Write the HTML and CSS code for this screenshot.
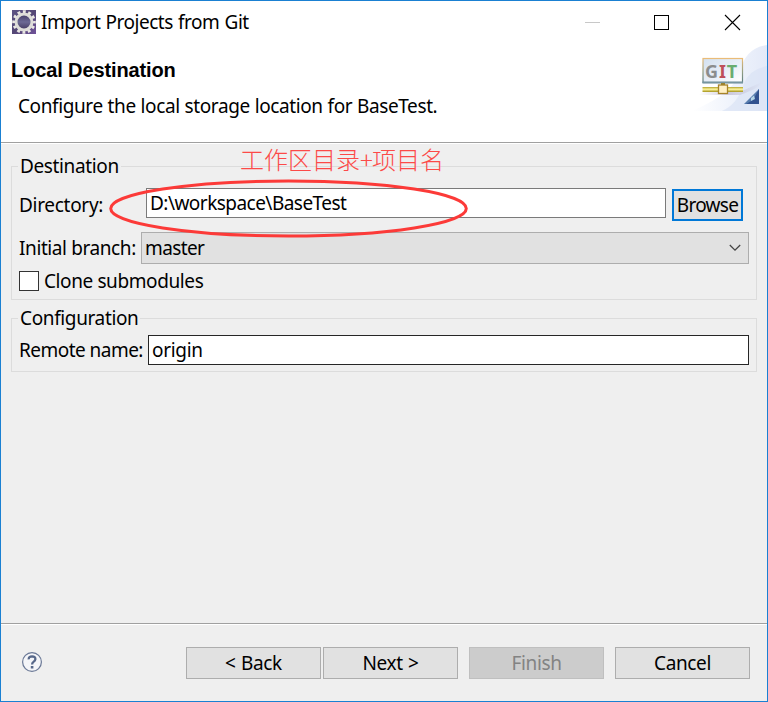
FILE: index.html
```html
<!DOCTYPE html>
<html lang="en">
<head>
<meta charset="utf-8">
<title>Import Projects from Git</title>
<link rel="stylesheet" href="styles.css">
</head>
<body>
<div class="window">
  <header class="titlebar">
    <svg class="app-icon" width="24" height="24" viewBox="0 0 24 24">
      <defs><linearGradient id="purple" x1="0" y1="0" x2="1" y2="1"><stop offset="0" stop-color="#5d5484"/><stop offset=".5" stop-color="#544775"/><stop offset="1" stop-color="#70529a"/></linearGradient>
      <linearGradient id="core" x1="0" y1="0" x2="0" y2="1"><stop offset="0" stop-color="#403663"/><stop offset=".5" stop-color="#6c6994"/><stop offset="1" stop-color="#40345c"/></linearGradient></defs>
      <rect width="24" height="24" fill="url(#purple)"/>
      <circle cx="12" cy="12" r="10.300" fill="none" stroke="#e9e7e3" stroke-width="3" stroke-dasharray="2.9 2.493" stroke-dashoffset="1.45"/>
      <circle cx="12" cy="12" r="8" fill="url(#core)" stroke="#deddd9" stroke-width="3"/>
    </svg>
    <span class="title">Import Projects from Git</span>
    <svg class="controls" width="160" height="24" viewBox="0 0 160 24" fill="none">
      <path d="M0 12.500h15" stroke="#c8c8c8"/>
      <rect x="69.500" y="5.500" width="14" height="14" stroke="#000"/>
      <path d="M140 5l15 15M155 5l-15 15" stroke="#000" stroke-width="1.100"/>
    </svg>
  </header>
  <section class="banner">
    <div class="banner-text">
      <h1>Local Destination</h1>
      <p>Configure the local storage location for BaseTest.</p>
    </div>
    <svg class="git-art" width="77" height="68" viewBox="690 43 77 68">
      <defs>
        <linearGradient id="sky" x1="0" y1="0" x2="1" y2="0"><stop offset="0" stop-color="#fff"/><stop offset=".5" stop-color="#f0f4fc"/><stop offset="1" stop-color="#e4eaf8"/></linearGradient>
        <linearGradient id="frame" x1="0" y1="0" x2="0" y2="1"><stop offset="0" stop-color="#eabc78"/><stop offset=".6" stop-color="#8d9b84"/><stop offset="1" stop-color="#597c80"/></linearGradient>
        <linearGradient id="panel" x1="0" y1="0" x2="1" y2="1"><stop offset="0" stop-color="#d3e1f0"/><stop offset=".5" stop-color="#e7eef7"/><stop offset="1" stop-color="#fff"/></linearGradient>
        <linearGradient id="cable" x1="0" y1="0" x2="0" y2="1"><stop offset="0" stop-color="#b2a129"/><stop offset=".45" stop-color="#fff7a0"/><stop offset="1" stop-color="#a39216"/></linearGradient>
        <linearGradient id="shade" x1="0" y1="0" x2="1" y2="0"><stop offset="0" stop-color="#b9b3cc" stop-opacity="0"/><stop offset=".5" stop-color="#b9b3cc" stop-opacity=".65"/><stop offset="1" stop-color="#b9b3cc" stop-opacity="0"/></linearGradient>
      </defs>
      <path d="M692 111C717 100 733 90 740 72Q745 48 767 45v66z" fill="url(#sky)"/>
      <path d="M722 111Q738 104 744 83Q750 69 767 66v45z" fill="#d9e2f5" opacity=".65"/>
      <path d="M698 95l8-4h36l20-9q-2 6-22 13z" fill="url(#shade)"/>
      <rect x="703" y="58.500" width="39.500" height="24" fill="url(#panel)" stroke="url(#frame)" stroke-width="1.200"/>
      <path d="M702.500 82.500h40.500" stroke="#7795a0" stroke-width="2"/>
      <g class="git-text"><text x="705" y="77.500" fill="#8b8d8d">G</text><text x="719" y="77.500" fill="#be4f59">I</text><text x="726.800" y="77.500" fill="#69ad70">T</text></g>
      <path d="M723 83v3" stroke="#988430" stroke-width="4"/>
      <rect x="702.500" y="87" width="40.500" height="5" fill="url(#cable)"/>
      <rect x="718.500" y="85" width="9" height="8.500" fill="#fff0c5" stroke="#a68328" stroke-width="1.300"/>
      <path d="M744 104L759 89V104z" fill="#577dae"/><path d="M753 100l6-11v15h-13z" fill="#32528f"/><path d="M751 98l3-2.500 1 3.500-4 2z" fill="#b5d5e6"/>
    </svg>
  </section>
  <main class="content">
    <fieldset class="group destination">
      <legend><span>Destination</span></legend>
      <div class="row directory-row">
        <label>Directory:</label>
        <div class="input directory">D:\workspace\BaseTest</div>
        <button class="browse">Browse</button>
      </div>
      <div class="row branch-row">
        <label>Initial branch:</label>
        <div class="select"><span class="branch-value">master</span>
          <svg width="12" height="8" viewBox="0 0 12 8"><path d="M.8 1L6 6.200 11.200 1" fill="none" stroke="#444" stroke-width="1.300"/></svg>
        </div>
      </div>
      <div class="row clone-row"><i class="checkbox"></i><span>Clone submodules</span></div>
    </fieldset>
    <fieldset class="group configuration">
      <legend><span>Configuration</span></legend>
      <div class="row remote-row">
        <label>Remote name:</label>
        <div class="input remote">origin</div>
      </div>
    </fieldset>
  </main>
  <footer class="footer">
    <svg class="help" width="22" height="22" viewBox="0 0 22 22"><circle cx="11" cy="11" r="9.400" fill="#f4f5f8" stroke="#6a7896" stroke-width="1.200"/><path d="M7.700 8.400Q7.600 5.400 11.100 5.300Q14.500 5.400 14.400 8.200Q14.200 9.800 12.500 10.900Q11.100 11.800 11.100 13.500" fill="none" stroke="#566789" stroke-width="2.300"/><rect x="9.800" y="15" width="2.600" height="2.500" fill="#566789"/></svg>
    <button>&lt; Back</button>
    <button class="next">Next &gt;</button>
    <button class="finish" disabled>Finish</button>
    <button class="cancel">Cancel</button>
  </footer>
  <div class="note" lang="zh-CN">工作区目录<span>+</span>项目名</div>
  <svg class="ellipse" width="362" height="60" viewBox="0 0 362 60"><ellipse cx="180.500" cy="29.500" rx="177.800" ry="27.500" fill="none" stroke="#fc3a38" stroke-width="3"/></svg>
</div>
</body>
</html>
```
FILE: styles.css
```css
* { box-sizing: border-box; }
body { margin: 0; font: 19px/26px "Noto Sans", "Open Sans", sans-serif; color: #000; }
.window { position: relative; width: 768px; height: 702px; display: flex; flex-direction: column; background: #efefef; border: 1px solid #1a80d2; overflow: hidden; }
span, label { white-space: nowrap; }
.titlebar { height: 42px; flex: none; display: flex; align-items: center; background: #fff; padding-left: 11px; }
.title { margin-left: 5px; letter-spacing: -.47px; word-spacing: .7px; }
.controls { margin-left: auto; margin-right: 22px; }
.banner { height: 101px; flex: none; display: flex; justify-content: space-between; background: #fff; border-bottom: 1px solid #fff; box-shadow: inset 0 -1px #a0a0a0; }
.banner-text { padding: 13px 0 0 10px; }
h1 { margin: 0; font: bold 20px/28px "Liberation Sans", Arial, sans-serif; letter-spacing: -.12px; }
p { margin: 9px 0 0 7px; letter-spacing: -.4px; word-spacing: .35px; white-space: nowrap; }
.git-art { flex: none; }
.git-text { font: bold 18px "Noto Sans", sans-serif; }
.content { flex: 1; padding: 9px 10px 0; }
.group { margin: 0; border: 1px solid #dcdcdc; padding: 0; min-width: 0; }
.group legend { margin-left: 6px; padding: 0 2px; height: 26px; letter-spacing: -.37px; }
.row { display: flex; align-items: center; padding-left: 7px; letter-spacing: -.4px; }
.destination { height: 147px; }
.directory-row { height: 32px; margin-top: 10px; }
.directory-row label { width: 127px; letter-spacing: -.3px; }
.input { background: #fff; border: 1px solid #7a7a7a; height: 30px; line-height: 28px; padding-left: 3px; }
.directory { width: 520px; margin-bottom: 4px; letter-spacing: -.53px; }
button { font: inherit; color: #000; letter-spacing: -.35px; word-spacing: .8px; width: 135px; height: 32px; padding: 0; border: 1px solid #adadad; background: #e1e1e1; border-radius: 0; }
.browse { width: 71px; margin-left: 6px; border: 2px solid #0078d7; letter-spacing: -.7px; }
.branch-row { height: 32px; margin-top: 11px; }
.branch-row label { width: 122px; }
.branch-value { letter-spacing: -.6px; }
.select { width: 608px; height: 32px; border: 1px solid #adadad; background: #e1e1e1; display: flex; justify-content: space-between; align-items: center; padding: 0 7px 0 3px; }
.clone-row { height: 32px; margin-top: 1px; }
.checkbox { width: 20px; height: 20px; border: 1px solid #333; background: #fff; margin-right: 5px; }
.configuration { height: 67px; margin-top: 5px; }
.remote-row { height: 30px; margin-top: 4px; }
.remote-row label { width: 129px; letter-spacing: -.53px; }
.remote { width: 601px; border-color: #262626; letter-spacing: -.3px; }
.footer { height: 78px; flex: none; border-top: 1px solid #a0a0a0; box-shadow: inset 0 1px #fff; display: flex; align-items: flex-start; padding: 23px 17px 0 20px; }
.help { margin: 4px 143px 0 0; }
.next { margin-left: 2px; }
.finish { margin-left: 11px; background: #ccc; border-color: #bfbfbf; color: #838383; }
.cancel { margin-left: 11px; }
.note { position: absolute; left: 239px; top: 141px; color: #fc4a48; font: 300 24px/34px "Noto Sans CJK SC", sans-serif; white-space: nowrap; }
.note span { display: inline-block; width: 12px; text-align: center; }
.ellipse { position: absolute; left: 107px; top: 178px; }
```
